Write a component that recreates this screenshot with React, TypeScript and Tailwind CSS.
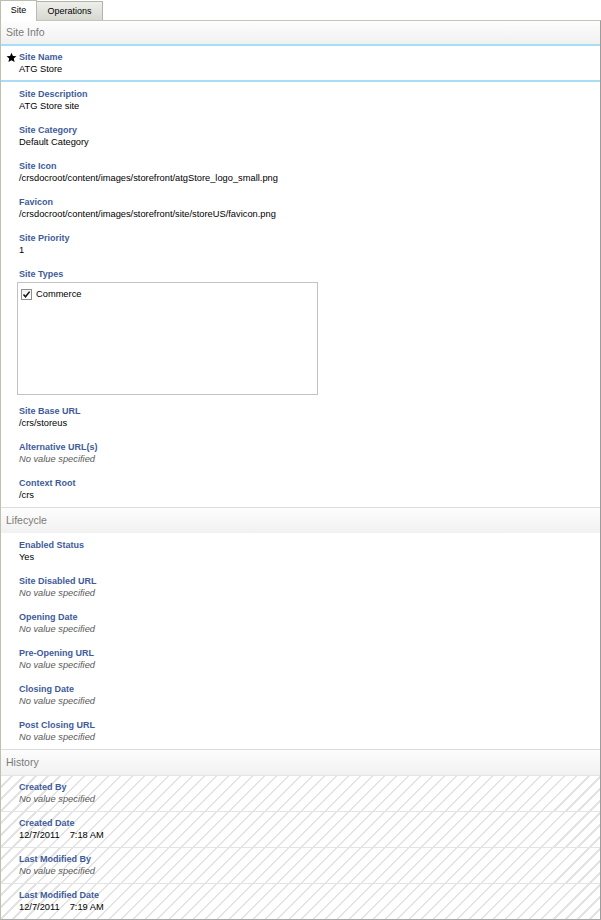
const NONE = 'No value specified';

type Field = { label: string; value?: string; date?: [string, string] };

const siteInfo: Field[] = [
  { label: 'Site Description', value: 'ATG Store site' },
  { label: 'Site Category', value: 'Default Category' },
  { label: 'Site Icon', value: '/crsdocroot/content/images/storefront/atgStore_logo_small.png' },
  { label: 'Favicon', value: '/crsdocroot/content/images/storefront/site/storeUS/favicon.png' },
  { label: 'Site Priority', value: '1' },
];

const siteInfo2: Field[] = [
  { label: 'Site Base URL', value: '/crs/storeus' },
  { label: 'Alternative URL(s)' },
  { label: 'Context Root', value: '/crs' },
];

const lifecycle: Field[] = [
  { label: 'Enabled Status', value: 'Yes' },
  { label: 'Site Disabled URL' },
  { label: 'Opening Date' },
  { label: 'Pre-Opening URL' },
  { label: 'Closing Date' },
  { label: 'Post Closing URL' },
];

const history: Field[] = [
  { label: 'Created By' },
  { label: 'Created Date', date: ['12/7/2011', '7:18 AM'] },
  { label: 'Last Modified By' },
  { label: 'Last Modified Date', date: ['12/7/2011', '7:19 AM'] },
];

function Value({ f }: { f: Field }) {
  if (f.date) {
    return (
      <div className="leading-[12px] text-[9.3px] text-black">
        {f.date[0]}
        <span className="ml-[10px]">{f.date[1]}</span>
      </div>
    );
  }
  if (!f.value) {
    return <div className="leading-[12px] text-[9.3px] italic text-[#5a5a5a]">{NONE}</div>;
  }
  return <div className="leading-[12px] text-[9.3px] text-black">{f.value}</div>;
}

function Label({ text }: { text: string }) {
  return <div className="leading-[12px] font-bold text-[#3e5b9a]">{text}</div>;
}

function FieldRow({ f }: { f: Field }) {
  return (
    <div className="pl-[18px] pt-[6px] pb-[6px]">
      <Label text={f.label} />
      <Value f={f} />
    </div>
  );
}

function Star() {
  return (
    <svg width="11" height="11" viewBox="0 0 24 24" className="mt-[1px]">
      <path d="M12 1.5l3.1 7.1 7.7.7-5.8 5.1 1.7 7.6L12 18l-6.7 4 1.7-7.6-5.8-5.1 7.7-.7z" fill="#000" />
    </svg>
  );
}

function Checkbox() {
  return (
    <div className="w-[11px] h-[11px] border border-[#8f8f8f] bg-gradient-to-b from-[#f2f2f2] to-[#ffffff] flex items-center justify-center">
      <svg width="9" height="9" viewBox="0 0 9 9">
        <path d="M1.5 4.6l2 2.2L7.6 1.6" stroke="#111" strokeWidth="1.5" fill="none" />
      </svg>
    </div>
  );
}

export default function App() {
  return (
    <div className="w-[601px] h-[920px] bg-white font-['Liberation_Sans',Arial,sans-serif] text-[9px] text-black overflow-hidden">
      {/* Tabs */}
      <div className="flex items-end h-[20px]">
        <div className="relative z-10 -mb-px w-[37px] h-[21px] bg-white border-l border-t border-r border-[#bdbdad] flex items-center justify-center">
          Site
        </div>
        <div className="w-[66px] h-[19px] border-t border-r border-[#b4b4a6] bg-gradient-to-b from-[#eeeeea] to-[#d8d8d2] flex items-center justify-center pt-[1px]">
          Operations
        </div>
      </div>

      {/* Panel */}
      <div className="h-[900px] border-t border-l border-b border-r border-t-[#c6c6b6] border-l-[#c0c0b0] border-r-[#9c9c9c] border-b-[#a8a8a8]">
        <div className="h-[25px] flex items-center pl-[5px] pt-[1px] bg-gradient-to-b from-[#fdfdfd] to-[#f1f1f1] text-[10.5px] text-[#7a7a7a] border-b-2 border-[#a9dcf7]">
          Site Info
        </div>

        <div className="flex pl-[5px] pt-[5px] pb-[5px] border-b-2 border-[#a9dcf7]">
          <div className="w-[11px] mr-[2px]">
            <Star />
          </div>
          <div>
            <Label text="Site Name" />
            <div className="leading-[12px] text-[9.3px]">ATG Store</div>
          </div>
        </div>

        {siteInfo.map((f) => (
          <FieldRow key={f.label} f={f} />
        ))}

        <div className="pl-[16px] pt-[6px] pb-[4px]">
          <div className="pl-[2px]">
            <Label text="Site Types" />
          </div>
          <div className="mt-[2px] w-[301px] h-[113px] border border-[#c2c2c2] pl-[3px] pt-[5px]">
            <div className="flex items-center">
              <Checkbox />
              <span className="ml-[4px] leading-[12px] text-[9.3px]">Commerce</span>
            </div>
          </div>
        </div>

        {siteInfo2.map((f) => (
          <FieldRow key={f.label} f={f} />
        ))}

        <div className="h-[26px] flex items-center pl-[5px] pt-[1px] bg-gradient-to-b from-[#fdfdfd] to-[#f1f1f1] text-[10.5px] text-[#7a7a7a] border-t border-[#dcdcdc]">
          Lifecycle
        </div>
        {lifecycle.map((f) => (
          <FieldRow key={f.label} f={f} />
        ))}

        <div className="h-[26px] flex items-center pl-[5px] pt-[1px] bg-gradient-to-b from-[#fdfdfd] to-[#f1f1f1] text-[10.5px] text-[#7a7a7a] border-t border-[#dcdcdc]">
          History
        </div>
        {history.map((f) => (
          <div
            key={f.label}
            className="h-[36px] pl-[18px] pt-[5px] border-t border-[#e4e4e4] bg-[repeating-linear-gradient(135deg,#ffffff_0px,#ffffff_7px,#e3e3e3_7px,#e3e3e3_8.5px)]"
          >
            <Label text={f.label} />
            <Value f={f} />
          </div>
        ))}
      </div>
    </div>
  );
}
